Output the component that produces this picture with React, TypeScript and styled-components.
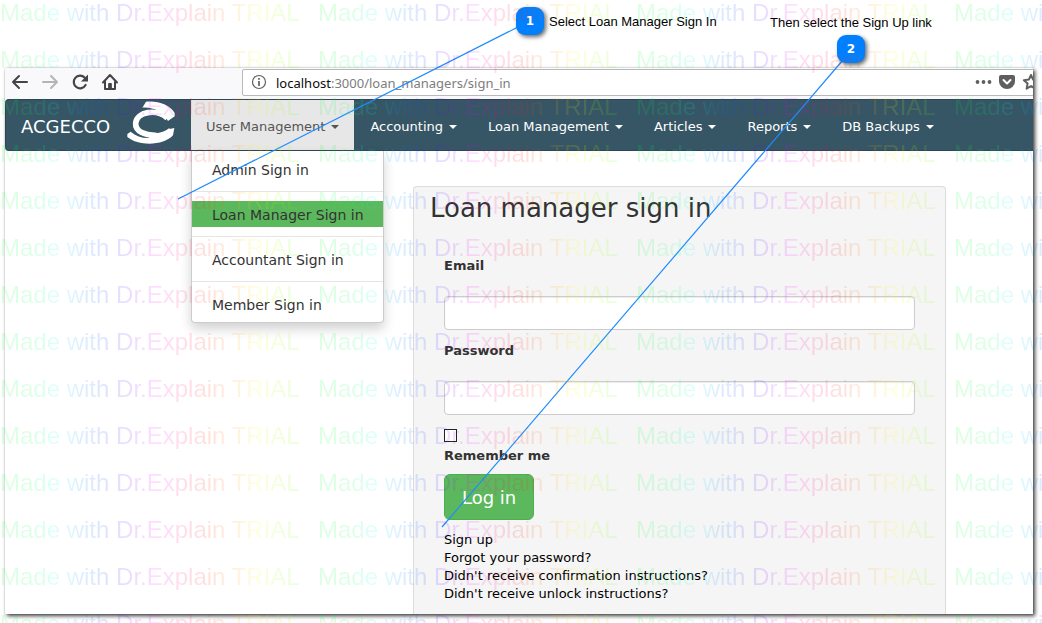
import React from 'react';
import styled, { createGlobalStyle, css } from 'styled-components';

const GlobalStyle = createGlobalStyle`
  *, *::before, *::after { box-sizing: border-box; }
  html, body { margin: 0; padding: 0; background: #fff; }
  body { font-family: 'DejaVu Sans', Verdana, sans-serif; font-size: 13px; line-height: 18px; color: #333; overflow: hidden; }
`;

const Page = styled.div`
  position: relative;
  min-height: 100vh;
  padding: 68px 9px 9px 5px;
  overflow: hidden;
`;

const BrowserWindow = styled.main`
  background: #fff;
  box-shadow: 2px 2px 4px rgba(0, 0, 0, 0.75), 0 0 1px rgba(0, 0, 0, 0.3);
`;

const Toolbar = styled.div`
  display: flex;
  align-items: center;
  height: 31px;
  padding: 0 0 4px 5px;
  gap: 10px;
  background: #f9f9fb;
  overflow: hidden;
`;

const ToolButton = styled.button<{ $dim?: boolean }>`
  display: flex;
  flex: none;
  padding: 0;
  border: 0;
  background: none;
  color: ${p => (p.$dim ? '#b4b4b5' : '#444446')};
`;

const AddressBar = styled.div`
  display: flex;
  flex: 1;
  align-items: center;
  height: 27px;
  margin: 1px -8px 0 112px;
  padding-left: 8px;
  gap: 9px;
  border: 1px solid #b9b9bb;
  border-radius: 2px;
  background: #fff;
  color: #5f5f60;
`;

const Address = styled.span`
  flex: 1;
  padding-top: 2px;
  font: 13px/18px 'Noto Sans', 'Open Sans', sans-serif;
  color: #7d7d7d;
  b { font-weight: 400; color: #0c0c0d; }
`;

const AddressIcons = styled.div`
  display: flex;
  align-items: center;
  gap: 7px;
`;

const Navbar = styled.nav`
  position: relative;
  display: flex;
  align-items: stretch;
  height: 52px;
  border: 1px solid #2d4655;
  border-right: 0;
  border-radius: 4px 0 0 4px;
  background: #365666;
  color: #fff;
`;

const Brand = styled.a`
  display: flex;
  align-items: center;
  width: 185px;
  padding: 4px 15px 0;
  gap: 17px;
  font-size: 18px;
  color: #fff;
  text-decoration: none;
  svg { flex: none; margin-top: -10px; }
`;

const NavList = styled.ul`
  display: flex;
  gap: 1px;
  margin: 0;
  padding: 0;
  list-style: none;
`;

const NavItem = styled.li`
  position: relative;
`;

const NavButton = styled.button<{ $open?: boolean }>`
  display: flex;
  align-items: center;
  height: 50px;
  padding: 4px 15px 0;
  gap: 6px;
  border: 0;
  font: inherit;
  white-space: nowrap;
  background: ${p => (p.$open ? '#e7e7e7' : 'transparent')};
  color: ${p => (p.$open ? '#555' : '#fff')};
  &::after {
    content: '';
    border: 4px solid transparent;
    border-top-color: currentColor;
    border-bottom: 0;
  }
`;

const Dropdown = styled.ul`
  position: absolute;
  z-index: 2;
  top: 100%;
  left: 0;
  width: 193px;
  margin: 1px 0 0;
  padding: 5px 0;
  list-style: none;
  border: 1px solid #ccc;
  border-top: 0;
  border-radius: 0 0 4px 4px;
  background: #fff;
  box-shadow: 0 6px 12px rgba(0, 0, 0, 0.18);
`;

const DropdownItem = styled.li`
  & + & {
    margin-top: 9px;
    padding-top: 9px;
    border-top: 1px solid #e5e5e5;
  }
`;

const DropdownLink = styled.a<{ $active?: boolean }>`
  display: block;
  padding: 4px 20px 2px;
  font-size: 14px;
  line-height: 20px;
  white-space: nowrap;
  text-decoration: none;
  color: #333;
  ${p => p.$active && css`background: #5cb85c;`}
`;

const Well = styled.section`
  margin: 35px 87px 0 408px;
  padding: 0 30px 11px;
  border: 1px solid #dcdcdc;
  border-bottom: 0;
  border-radius: 4px 4px 0 0;
  background: #f5f5f5;
`;

const Title = styled.h2`
  margin: 5px 0 33px -14px;
  font-size: 26px;
  font-weight: 400;
  line-height: 32px;
`;

const Field = styled.div`
  display: flex;
  flex-direction: column;
  gap: 21px;
  margin-bottom: 12px;
`;

const Label = styled.label`
  font-weight: 700;
`;

const TextInput = styled.input`
  width: 100%;
  height: 34px;
  padding: 6px 12px;
  border: 1px solid #ccc;
  border-radius: 4px;
  background: #fff;
  box-shadow: inset 0 1px 1px rgba(0, 0, 0, 0.08);
`;

const Remember = styled.div`
  display: flex;
  flex-direction: column;
  gap: 5px;
  padding-top: 2px;
`;

const Checkbox = styled.input`
  appearance: none;
  width: 13px;
  height: 13px;
  margin: 0;
  border: 1px solid #222;
  background: #fff;
`;

const SubmitButton = styled.button`
  display: block;
  height: 46px;
  margin: 9px 0 11px;
  padding: 2px 17px 0;
  border: 1px solid #4cae4c;
  border-radius: 6px;
  background: #5cb85c;
  color: #fff;
  font: inherit;
  font-size: 18px;
`;

const FormLink = styled.a`
  display: block;
  width: fit-content;
  color: #000;
  text-decoration: none;
`;

const Leader = styled.svg`
  position: absolute;
  z-index: 3;
  top: 0;
  left: 0;
  pointer-events: none;
`;

const Callout = styled.div<{ $x: number; $y: number }>`
  position: absolute;
  z-index: 4;
  left: ${p => p.$x}px;
  top: ${p => p.$y}px;
  font: 13px/16px 'Liberation Sans', Arial, sans-serif;
  color: #000;
  white-space: nowrap;
`;

const Badge = styled(Callout)`
  width: 28px;
  height: 28px;
  border-radius: 9px;
  background: #0080ff;
  box-shadow: 2px 2px 4px rgba(0, 0, 0, 0.6);
  color: #fff;
  font: bold 12px/28px 'DejaVu Sans', Verdana, sans-serif;
  text-align: center;
`;

const Watermark = styled.div`
  position: absolute;
  z-index: 5;
  inset: 0;
  overflow: hidden;
  opacity: 0.13;
  pointer-events: none;
`;

const WatermarkRow = styled.div`
  display: flex;
  height: 47px;
  font: 24px/26px 'Liberation Sans', Arial, sans-serif;
  white-space: nowrap;
`;

const Mark = styled.span`
  flex: none;
  width: 318px;
  background: linear-gradient(90deg, #00ff20, #00ff60 11%, #00ffff 19%, #0080ff 26%, #2020ff 36%, #8000ff 41%, #ff00ff 49%, #ff0060 58%, #ff2000 65%, #ff8000 72%, #ffff00 81%, #a0ff00 88%, #60ff00 94%);
  background-clip: text;
  -webkit-background-clip: text;
  color: transparent;
`;

const BackIcon = () => (
  <svg width="20" height="20" viewBox="0 0 20 20" fill="none" stroke="currentColor" strokeWidth="2" strokeLinecap="round" strokeLinejoin="round">
    <path d="M17 10H3M9 4l-6 6 6 6" />
  </svg>
);

const ForwardIcon = () => (
  <svg width="20" height="20" viewBox="0 0 20 20" fill="none" stroke="currentColor" strokeWidth="2" strokeLinecap="round" strokeLinejoin="round">
    <path d="M3 10h14M11 4l6 6-6 6" />
  </svg>
);

const ReloadIcon = () => (
  <svg width="20" height="20" viewBox="0 0 20 20" fill="none" stroke="currentColor" strokeWidth="2.2" strokeLinecap="round">
    <path d="M15.6 13A6.300 6.300 0 1 1 14.600 5.600" />
    <path d="M18 2.500v7h-7z" fill="currentColor" stroke="none" />
  </svg>
);

const HomeIcon = () => (
  <svg width="20" height="20" viewBox="0 0 20 20" fill="none" stroke="currentColor" strokeWidth="2" strokeLinecap="round" strokeLinejoin="round">
    <path d="M3 10.500l7-7.500 7 7.500M5 9.500V17h10V9.500" />
    <path d="M8.700 16v-4.500h2.600v5z" fill="currentColor" strokeWidth="1" />
  </svg>
);

const InfoIcon = () => (
  <svg width="16" height="16" viewBox="0 0 16 16" fill="none" stroke="currentColor">
    <circle cx="8" cy="8" r="6.500" strokeWidth="1.200" />
    <path d="M8 7v5M8 4v1.700" strokeWidth="1.700" />
  </svg>
);

const DotsIcon = () => (
  <svg width="17" height="16" viewBox="0 0 17 16" fill="currentColor">
    <circle cx="2.500" cy="8" r="1.900" /><circle cx="8.500" cy="8" r="1.900" /><circle cx="14.500" cy="8" r="1.900" />
  </svg>
);

const PocketIcon = () => (
  <svg width="16" height="16" viewBox="0 0 16 16">
    <path d="M2 1h12a2 2 0 0 1 2 2v4.500a8 7.500 0 0 1-16 0V3a2 2 0 0 1 2-2z" fill="currentColor" />
    <path d="M4.500 6L8 9.500 11.500 6" fill="none" stroke="#fff" strokeWidth="2" strokeLinecap="round" strokeLinejoin="round" />
  </svg>
);

const StarIcon = () => (
  <svg width="18" height="18" viewBox="0 0 18 18" fill="none" stroke="currentColor" strokeWidth="2" strokeLinejoin="round">
    <path d="M9 2l2.100 4.600 5 .6-3.700 3.400 1 5L9 13.100l-4.400 2.500 1-5L1.900 7.200l5-.6z" />
  </svg>
);

const Logo = () => (
  <svg width="48" height="43" viewBox="0 0 144 129" fill="#fff">
    <path d="M46 20L57 2C92 -2 130 12 143 36L143 46L123 60C108 34 82 18 46 20Z" />
    <path d="M121 51C88 22 29 32 26 66C24 92 56 104 88 103" fill="none" stroke="#fff" strokeWidth="17" />
    <path d="M1 99L11 92C28 107 48 113 70 111C98 112 122 100 128 84L142 81L138 103C112 133 38 138 1 108Z" />
    <path d="M66 95C92 100 112 94 126 82L138 90L112 112L66 110Z" />
  </svg>
);

const menus = ['Accounting', 'Loan Management', 'Articles', 'Reports', 'DB Backups'];
const signIns = ['Admin Sign in', 'Loan Manager Sign in', 'Accountant Sign in', 'Member Sign in'];
const links = ['Sign up', 'Forgot your password?', "Didn't receive confirmation instructions?", "Didn't receive unlock instructions?"];

export default function App() {
  return (
    <Page>
      <GlobalStyle />
      <BrowserWindow>
        <Toolbar>
          <ToolButton aria-label="Back"><BackIcon /></ToolButton>
          <ToolButton aria-label="Forward" $dim><ForwardIcon /></ToolButton>
          <ToolButton aria-label="Reload"><ReloadIcon /></ToolButton>
          <ToolButton aria-label="Home"><HomeIcon /></ToolButton>
          <AddressBar>
            <InfoIcon />
            <Address><b>localhost</b>:3000/loan_managers/sign_in</Address>
            <AddressIcons>
              <DotsIcon />
              <PocketIcon />
              <StarIcon />
            </AddressIcons>
          </AddressBar>
        </Toolbar>
        <Navbar>
          <Brand href="#">ACGECCO<Logo /></Brand>
          <NavList>
            <NavItem>
              <NavButton $open aria-expanded="true">User Management</NavButton>
              <Dropdown>
                {signIns.map((name, i) => (
                  <DropdownItem key={name}>
                    <DropdownLink href="#" $active={i === 1}>{name}</DropdownLink>
                  </DropdownItem>
                ))}
              </Dropdown>
            </NavItem>
            {menus.map(name => (
              <NavItem key={name}><NavButton>{name}</NavButton></NavItem>
            ))}
          </NavList>
        </Navbar>
        <Well>
          <Title>Loan manager sign in</Title>
          <form>
            <Field>
              <Label htmlFor="email">Email</Label>
              <TextInput id="email" type="email" />
            </Field>
            <Field>
              <Label htmlFor="password">Password</Label>
              <TextInput id="password" type="password" />
            </Field>
            <Remember>
              <Checkbox id="remember" type="checkbox" />
              <Label htmlFor="remember">Remember me</Label>
            </Remember>
            <SubmitButton type="button">Log in</SubmitButton>
          </form>
          {links.map(text => <FormLink key={text} href="#">{text}</FormLink>)}
        </Well>
      </BrowserWindow>

      <Leader width="1042" height="623" stroke="#1e8cff" strokeWidth="1.200" aria-hidden="true">
        <path d="M518 27L178 199M843 60L442 527" />
      </Leader>
      <Badge $x={516} $y={7}>1</Badge>
      <Callout $x={549} $y={14}>Select Loan Manager Sign In</Callout>
      <Badge $x={837} $y={35}>2</Badge>
      <Callout $x={770} $y={15}>Then select the Sign Up link</Callout>

      <Watermark aria-hidden="true">
        {Array.from({ length: 14 }, (_, row) => (
          <WatermarkRow key={row}>
            {Array.from({ length: 4 }, (_, col) => <Mark key={col}>Made with Dr.Explain TRIAL</Mark>)}
          </WatermarkRow>
        ))}
      </Watermark>
    </Page>
  );
}
